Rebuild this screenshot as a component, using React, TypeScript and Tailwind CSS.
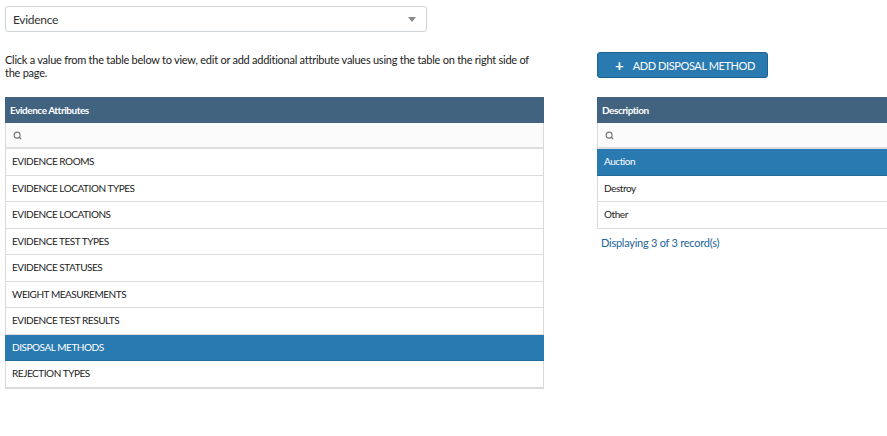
import { Search } from 'lucide-react';

const attributes = [
  'EVIDENCE ROOMS',
  'EVIDENCE LOCATION TYPES',
  'EVIDENCE LOCATIONS',
  'EVIDENCE TEST TYPES',
  'EVIDENCE STATUSES',
  'WEIGHT MEASUREMENTS',
  'EVIDENCE TEST RESULTS',
  'DISPOSAL METHODS',
  'REJECTION TYPES',
];

const methods = ['Auction', 'Destroy', 'Other'];

function SearchRow() {
  return (
    <div className="h-[26px] bg-[#fbfbfb] border-b-2 border-[#dedede] flex items-center px-[7px]">
      <Search className="w-[9px] h-[9px] text-[#777]" strokeWidth={3} />
    </div>
  );
}

function Row({ label, selected }: { label: string; selected: boolean }) {
  return (
    <div
      className={
        selected
          ? 'h-[26.5px] flex items-center bg-[#2a7ab2] text-white border-b border-[#236a9c] -mx-px px-[7px] text-[10px] tracking-[-0.45px]'
          : 'h-[26.5px] flex items-center px-[6px] text-[#222] border-b border-[#dcdcdc] bg-white text-[10px] tracking-[-0.45px]'
      }
    >
      {label}
    </div>
  );
}

export default function App() {
  return (
    <div
      className="w-[887px] h-[436px] overflow-hidden bg-white pt-[6px] pl-[5px] text-[11px] leading-[13px]"
      style={{ fontFamily: 'Lato, "Open Sans", sans-serif' }}
    >
      {/* Category select */}
      <div className="w-[422px] h-[26px] border border-[#cfd4d9] rounded-[3px] flex items-center justify-between pl-[7px] pr-[10px]">
        <span className="text-[12px] text-[#333] tracking-[-0.3px]">Evidence</span>
        <svg width="8" height="5" viewBox="0 0 8 5">
          <path d="M0 0h8L4 5z" fill="#888" />
        </svg>
      </div>

      <div className="flex gap-[53px] mt-[20px]">
        {/* Left column */}
        <div className="w-[539px] shrink-0">
          <p className="h-[45px] pr-[8px] text-[#222] pt-px tracking-[-0.25px]">
            Click a value from the table below to view, edit or add additional attribute values using the table on the right side of the page.
          </p>
          <div className="border-x border-b border-[#d9d9d9]">
            <div className="h-[26px] bg-[#42637f] text-white font-bold flex items-center px-[5px] -mx-px text-[10px] tracking-[-0.45px]">
              Evidence Attributes
            </div>
            <SearchRow />
            {attributes.map((a) => (
              <Row key={a} label={a} selected={a === 'DISPOSAL METHODS'} />
            ))}
          </div>
        </div>

        {/* Right column */}
        <div className="w-[300px] shrink-0">
          <div className="h-[45px]">
            <button className="h-[26px] w-[171px] bg-[#2a7ab2] border border-[#1f6290] rounded-[3px] text-white flex items-center pl-[17px] gap-[9px] text-[11px]">
              <span className="text-[15px] leading-none font-bold">+</span>
              <span className="tracking-[-0.4px]">ADD DISPOSAL METHOD</span>
            </button>
          </div>
          <div className="border-l border-[#d9d9d9]">
            <div className="h-[26px] bg-[#42637f] text-white font-bold flex items-center px-[5px] -ml-px text-[10px] tracking-[-0.45px]">
              Description
            </div>
            <SearchRow />
            {methods.map((m) => (
              <Row key={m} label={m} selected={m === 'Auction'} />
            ))}
          </div>
          <div className="mt-[7px] pl-[4px] text-[#23649a] tracking-[-0.25px]">Displaying 3 of 3 record(s)</div>
        </div>
      </div>
    </div>
  );
}
